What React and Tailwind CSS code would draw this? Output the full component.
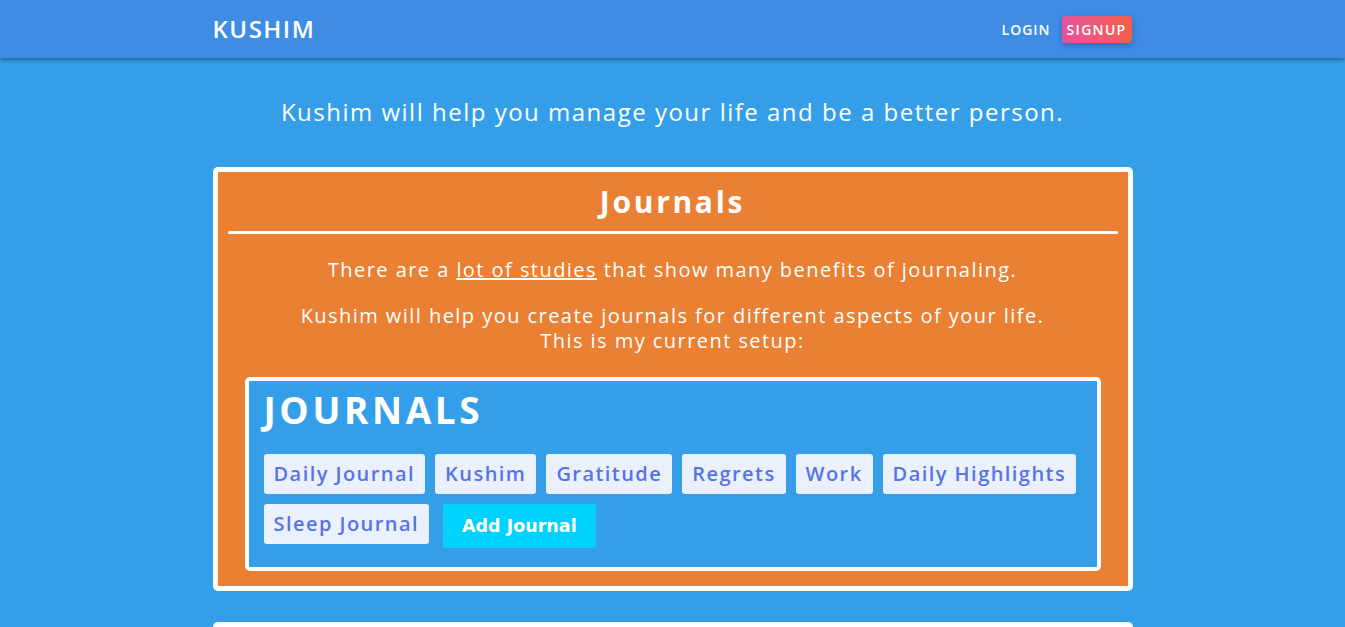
import React from "react";

const chips = ["Daily Journal", "Kushim", "Gratitude", "Regrets", "Work", "Daily Highlights", "Sleep Journal"];

export default function App() {
  return (
    <div className="min-h-screen bg-[#359ee8] text-white" style={{ fontFamily: '"Open Sans", "DejaVu Sans", sans-serif' }}>
      <nav className="h-[58px] bg-[#3e8ce4] shadow-[0_2px_4px_rgba(0,0,0,0.35)]">
        <div className="mx-auto flex h-full w-[920px] items-center justify-between">
          <div className="text-[24px] font-semibold tracking-[1.5px]">KUSHIM</div>
          <div className="mr-[1px] flex items-center gap-[11px]">
            <span className="text-[14px] font-semibold tracking-[1px]">LOGIN</span>
            <span className="flex h-[27px] items-center rounded-[3px] bg-gradient-to-r from-[#e6519d] to-[#f35f45] px-[5px] text-[14px] font-semibold tracking-[1.3px] shadow-[0_2px_6px_rgba(0,0,0,0.25)]">SIGNUP</span>
          </div>
        </div>
      </nav>
      <p className="mt-[36px] text-center text-[24px] tracking-[1.5px]">Kushim will help you manage your life and be a better person.</p>
      <div className="mx-auto mt-[37px] w-[920px] rounded-[5px] border-[5px] border-white bg-[#e98034] px-[10px] pb-[15px]">
        <h2 className="pt-[10px] text-center text-[30px] font-bold leading-[40px] tracking-[2.7px]">Journals</h2>
        <div className="mt-[9px] h-[3px] rounded bg-white" />
        <p className="mt-[24px] text-center text-[20px] leading-[24px] tracking-[1.45px]">There are a <span className="underline">lot of studies</span> that show many benefits of journaling.</p>
        <p className="mt-[21px] text-center text-[20px] leading-[25px] tracking-[1.45px]">Kushim will help you create journals for different aspects of your life.<br />This is my current setup:</p>
        <div className="mx-[17px] mt-[24px] rounded-[5px] border-[4px] border-white bg-[#359ee8] px-[15px] pb-[19px] pt-[5px]">
          <h3 className="text-[37px] font-bold leading-[48px] tracking-[3.6px]">JOURNALS</h3>
          <div className="mt-[20px] flex flex-wrap items-start gap-x-[10px] gap-y-[10px]">
            {chips.map((c) => (
              <span key={c} className="flex h-[40px] items-center rounded-[3px] bg-[#ebf0fd] px-[10px] text-[20px] font-semibold tracking-[1.45px] text-[#5674e8]">{c}</span>
            ))}
            <button className="ml-[4px] h-[44px] rounded-[3px] bg-[#00d2fd] px-[19px] text-[17.5px] font-bold text-white" style={{ fontFamily: '"DejaVu Sans", sans-serif' }}>Add Journal</button>
          </div>
        </div>
      </div>
      <div className="mx-auto mt-[31px] h-[20px] w-[920px] rounded-t-[5px] bg-white" />
    </div>
  );
}
